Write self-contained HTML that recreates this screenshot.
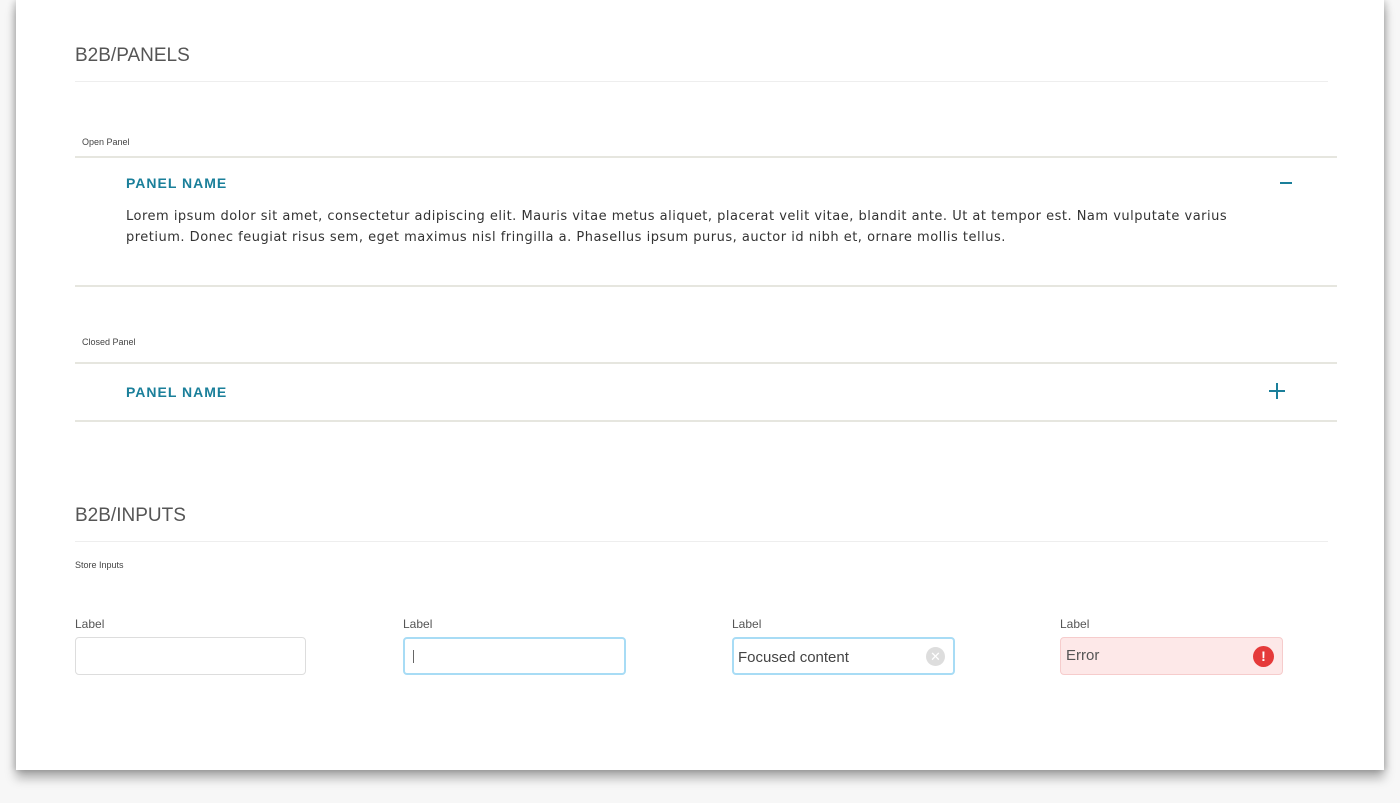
<!DOCTYPE html>
<html><head><style>
body{margin:0;width:1400px;height:803px;background:#f7f7f7;font-family:"Liberation Sans",sans-serif;position:relative;overflow:hidden}
.card{position:absolute;left:16px;top:0;width:1368px;height:770px;background:#fff;box-shadow:0 8px 10px rgba(0,0,0,.3),-3px 0 6px rgba(0,0,0,.12),3px 0 6px rgba(0,0,0,.12)}
.a{position:absolute;white-space:nowrap}
.h{font-size:19px;color:#555;font-weight:300}
.ln{position:absolute;height:1px;background:#eee}
.ln2{position:absolute;height:2px;background:#e6e6df}
.s{font-size:9px;color:#444}
.pn{font-size:14px;color:#1a7f9a;font-weight:bold;letter-spacing:1px}
.lab{font-size:12px;color:#555}
.in{position:absolute;border:1px solid #ddd;border-radius:4px;box-sizing:border-box;width:223px;height:38px}
</style></head><body>
<div class="card"></div>
<div class="a h" style="left:75px;top:45px">B2B/PANELS</div>
<div class="ln" style="left:75px;top:81px;width:1253px"></div>
<div class="a s" style="left:82px;top:137px">Open Panel</div>
<div class="ln2" style="left:75px;top:156px;width:1262px"></div>
<div class="a pn" style="left:126px;top:175px">PANEL NAME</div>
<div class="a" style="left:1280px;top:182px;width:12px;height:2px;background:#1a7f9a"></div>
<div class="a" style="left:126px;top:206px;font-family:'DejaVu Sans',sans-serif;font-size:13px;letter-spacing:.5px;color:#333;line-height:21px">Lorem ipsum dolor sit amet, consectetur adipiscing elit. Mauris vitae metus aliquet, placerat velit vitae, blandit ante. Ut at tempor est. Nam vulputate varius<br>pretium. Donec feugiat risus sem, eget maximus nisl fringilla a. Phasellus ipsum purus, auctor id nibh et, ornare mollis tellus.</div>
<div class="ln2" style="left:75px;top:285px;width:1262px"></div>
<div class="a s" style="left:82px;top:337px">Closed Panel</div>
<div class="ln2" style="left:75px;top:362px;width:1262px"></div>
<div class="a pn" style="left:126px;top:384px">PANEL NAME</div>
<div class="a" style="left:1269px;top:390px;width:16px;height:2px;background:#1a7f9a"></div>
<div class="a" style="left:1276px;top:383px;width:2px;height:16px;background:#1a7f9a"></div>
<div class="ln2" style="left:75px;top:420px;width:1262px"></div>
<div class="a h" style="left:75px;top:505px">B2B/INPUTS</div>
<div class="ln" style="left:75px;top:541px;width:1253px"></div>
<div class="a s" style="left:75px;top:560px">Store Inputs</div>
<div class="a lab" style="left:75px;top:617px">Label</div>
<div class="a lab" style="left:403px;top:617px">Label</div>
<div class="a lab" style="left:732px;top:617px">Label</div>
<div class="a lab" style="left:1060px;top:617px">Label</div>
<div class="in" style="left:75px;top:637px;width:231px"></div>
<div class="in" style="left:403px;top:637px;border:2px solid #a8dcf5"><div class="a" style="left:8px;top:11px;width:1px;height:13px;background:#666"></div></div>
<div class="in" style="left:732px;top:637px;border:2px solid #a8dcf5"><div class="a" style="left:4px;top:10px;font-size:15px;color:#444">Focused content</div><div class="a" style="left:192px;top:8px;width:19px;height:19px;border-radius:50%;background:#ddd;color:#fff;font-size:13px;line-height:19px;text-align:center">✕</div></div>
<div class="in" style="left:1060px;top:637px;background:#fde8e8;border:1px solid #f6cccc"><div class="a" style="left:5px;top:9px;font-size:15px;color:#555">Error</div><div class="a" style="left:192px;top:8px;width:21px;height:21px;border-radius:50%;background:#e53a3a;color:#fff;font-size:14px;font-weight:bold;line-height:21px;text-align:center">!</div></div>
</body></html>
